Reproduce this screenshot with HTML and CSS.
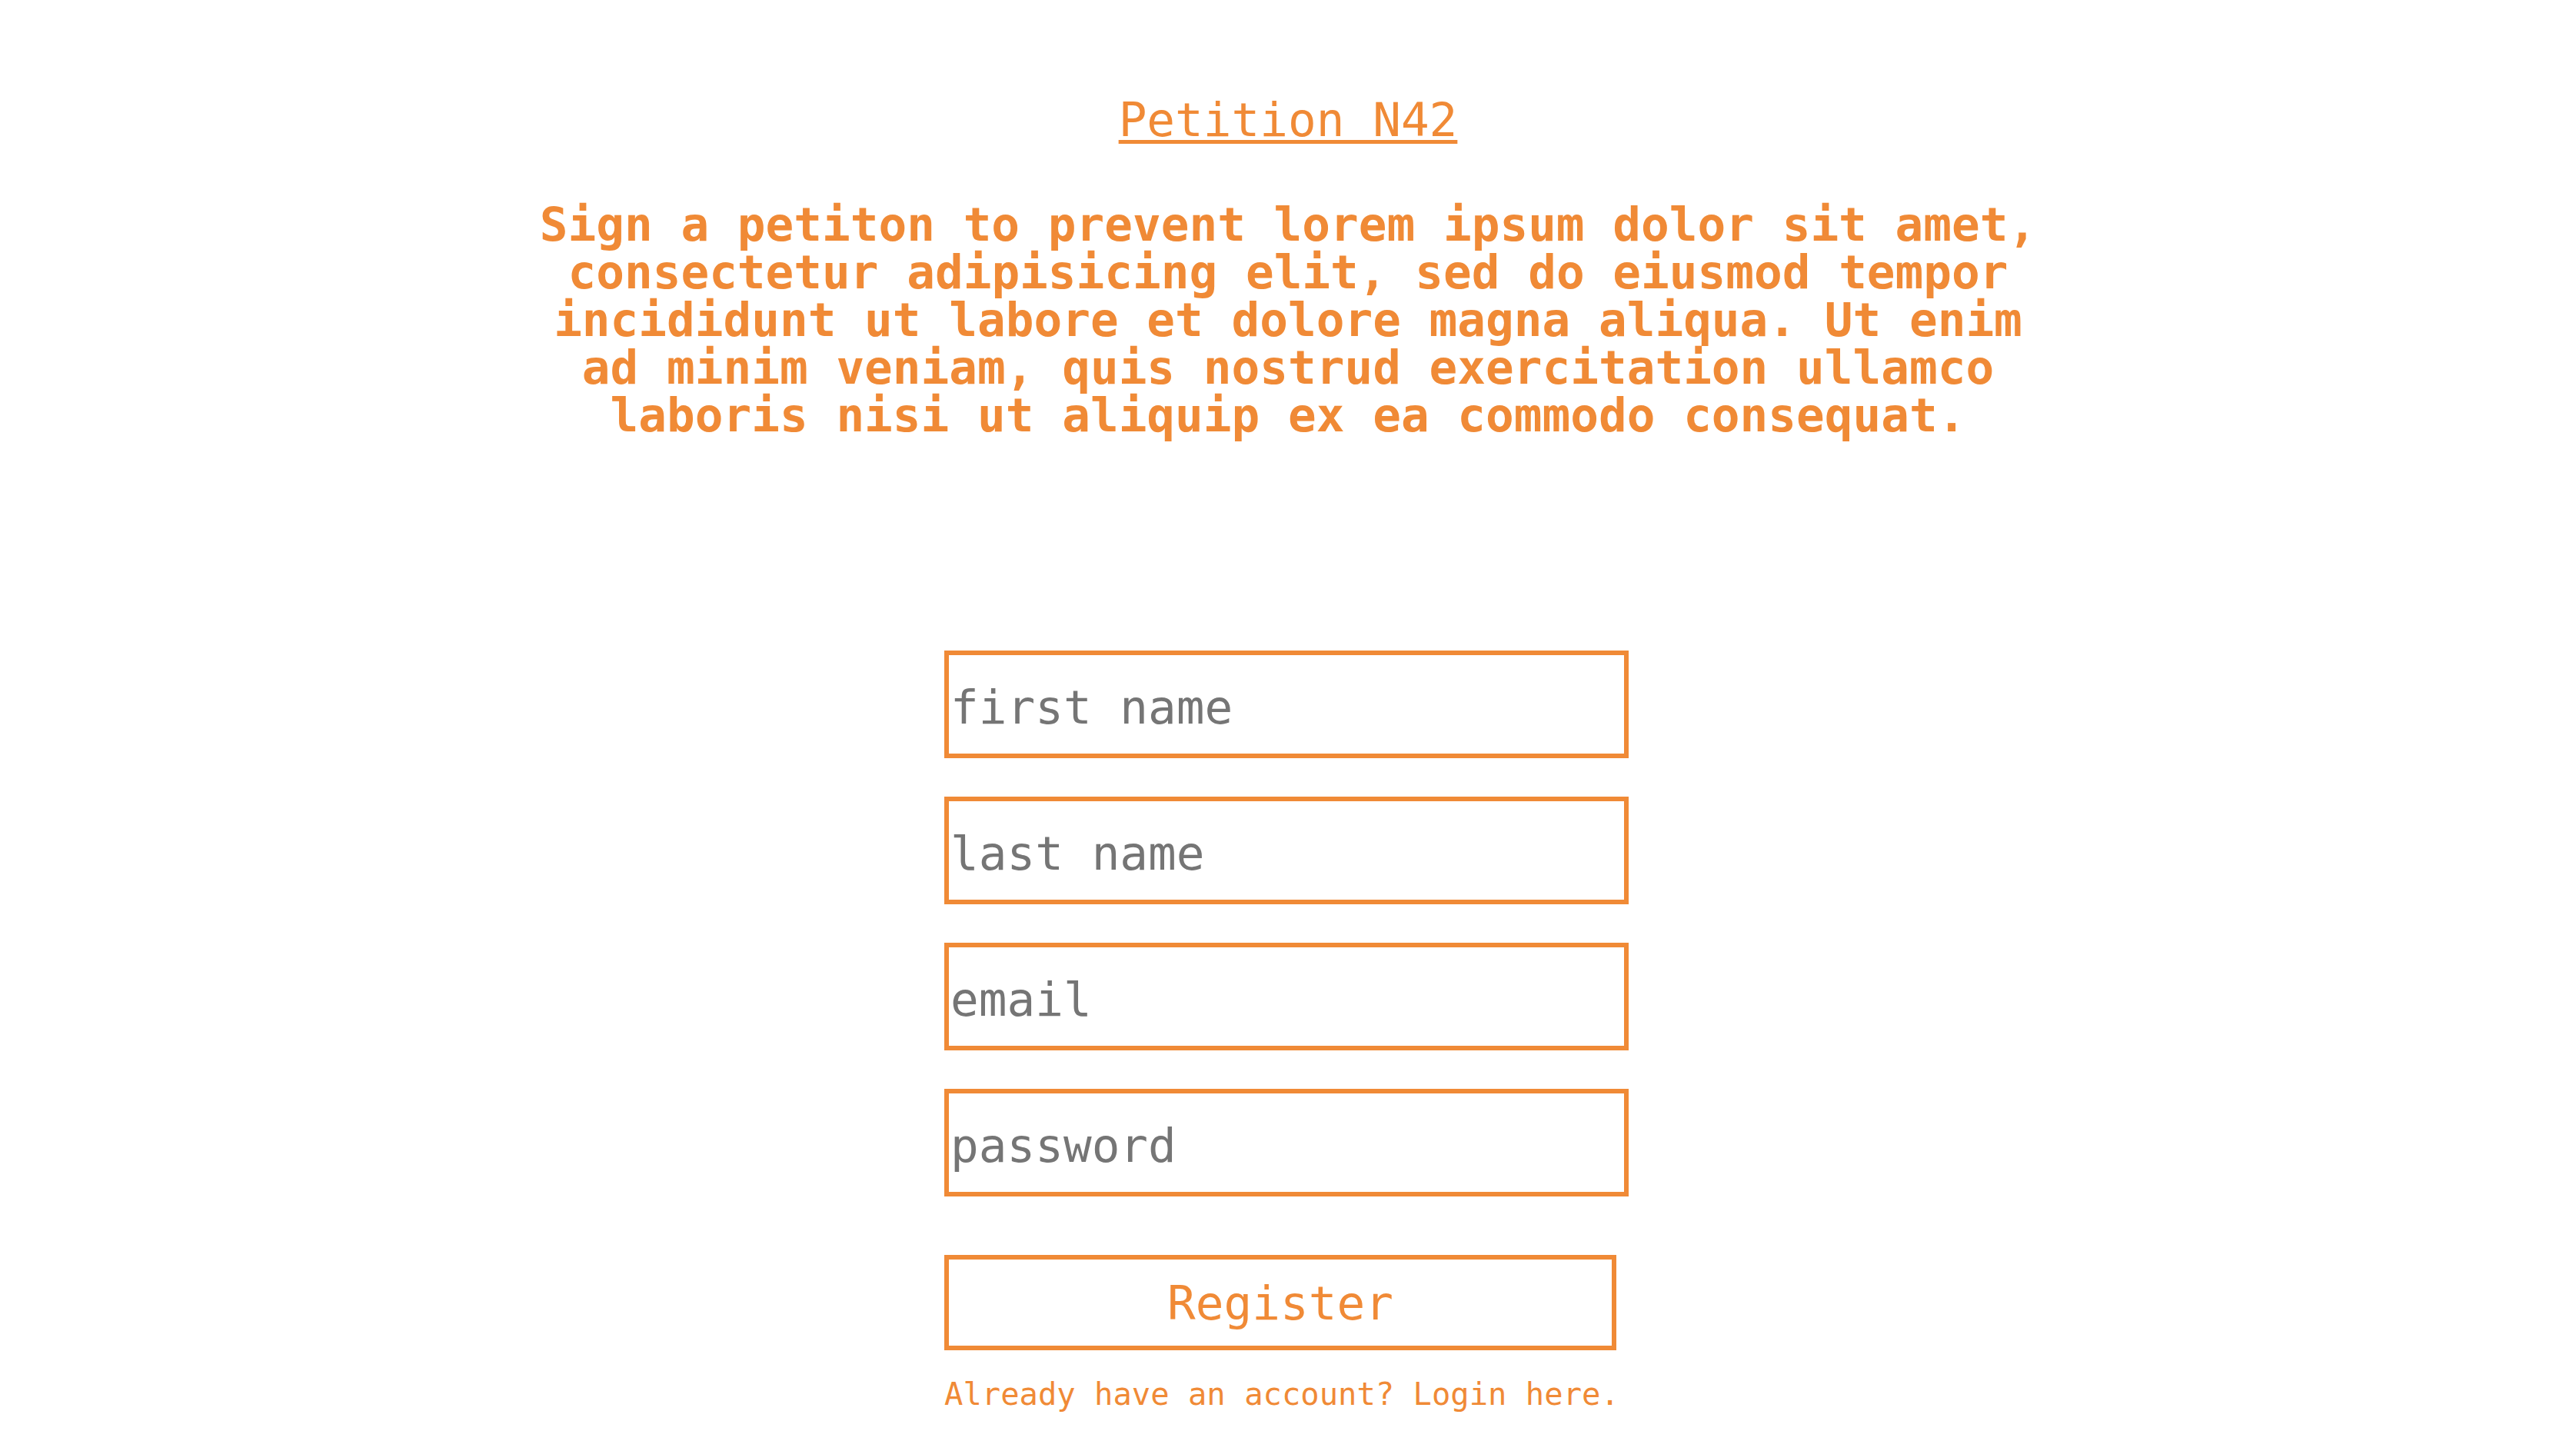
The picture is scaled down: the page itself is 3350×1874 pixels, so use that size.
FILE: index.html
```html
<!DOCTYPE html>
<html lang="en">
<head>
<meta charset="utf-8">
<title>Petition N42</title>
<link rel="stylesheet" href="styles.css">
</head>
<body>
<main class="page">
  <h1 class="title">Petition N42</h1>
  <p class="intro">Sign a petiton to prevent lorem ipsum dolor sit amet, consectetur adipisicing elit, sed do eiusmod tempor incididunt ut labore et dolore magna aliqua. Ut enim ad minim veniam, quis nostrud exercitation ullamco laboris nisi ut aliquip ex ea commodo consequat.</p>
  <form class="form">
    <div class="fields">
      <input class="field" type="text" placeholder="first name">
      <input class="field" type="text" placeholder="last name">
      <input class="field" type="email" placeholder="email">
      <input class="field" type="password" placeholder="password">
    </div>
    <button class="btn" type="button">Register</button>
    <a class="login" href="#">Already have an account? Login here.</a>
  </form>
</main>
</body>
</html>
```

FILE: styles.css
```css
html, body {
  margin: 0;
  padding: 0;
  background: #ffffff;
}

body {
  font-family: "DejaVu Sans Mono", "Liberation Mono", monospace;
  color: #f08a36;
}

.page {
  display: flex;
  flex-direction: column;
  align-items: center;
  padding-top: 120px;
}

.title {
  margin: 0;
  font-size: 61px;
  line-height: 71px;
  font-weight: 400;
  text-decoration: underline;
  text-decoration-thickness: 5px;
  text-underline-offset: 5px;
}

.intro {
  margin: 70px 0 0;
  width: 54ch;
  font-size: 61px;
  line-height: 62px;
  font-weight: 700;
  text-align: center;
}

.form {
  width: 894px;
  margin-top: 275px;
  display: flex;
  flex-direction: column;
  align-items: flex-start;
}

.fields {
  display: flex;
  flex-direction: column;
  gap: 50px;
}

.field {
  box-sizing: border-box;
  width: 890px;
  height: 140px;
  margin: 0;
  padding: 6px 2px 0;
  border: 6px solid #f08a36;
  border-radius: 0;
  background: #ffffff;
  font-family: inherit;
  font-size: 61px;
  color: #757575;
  outline: none;
}

.field::placeholder {
  color: #757575;
  opacity: 1;
}

.btn {
  box-sizing: border-box;
  width: 874px;
  height: 124px;
  margin-top: 76px;
  padding: 0;
  border: 6px solid #f08a36;
  border-radius: 0;
  background: #ffffff;
  font-family: inherit;
  font-size: 61px;
  color: #f08a36;
  cursor: pointer;
}

.login {
  margin-top: 33px;
  font-size: 40.5px;
  color: #f08a36;
  text-decoration: none;
}
```
